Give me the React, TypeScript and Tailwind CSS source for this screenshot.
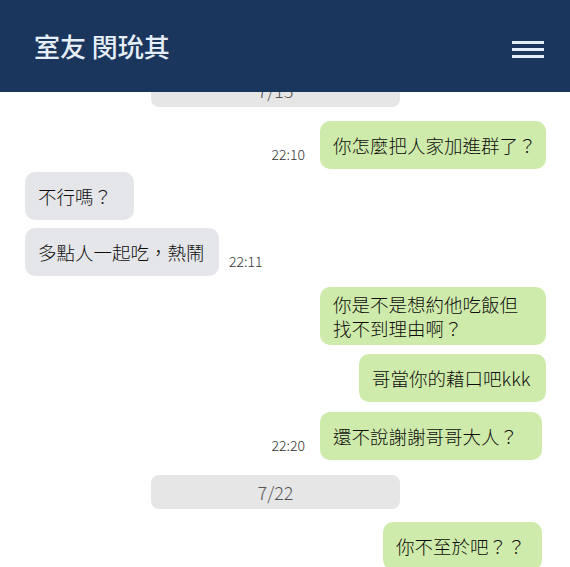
const font = { fontFamily: '"Noto Sans CJK TC", "Noto Sans", sans-serif' };

type Msg =
  | { kind: "date"; text: string; mt: string }
  | { kind: "me" | "them"; lines: string[]; time?: string; mt: string; w: string; py?: string; mr?: string };

const messages: Msg[] = [
  { kind: "date", text: "7/15", mt: "mt-0" },
  { kind: "me", lines: ["你怎麼把人家加進群了？"], time: "22:10", mt: "mt-[14px]", w: "w-[226px]" },
  { kind: "them", lines: ["不行嗎？"], mt: "mt-[3px]", w: "w-[109px]" },
  { kind: "them", lines: ["多點人一起吃，熱鬧"], time: "22:11", mt: "mt-[8px]", w: "w-[194px]" },
  { kind: "me", lines: ["你是不是想約他吃飯但", "找不到理由啊？"], mt: "mt-[11px]", w: "w-[226px]", py: "py-[5px]" },
  { kind: "me", lines: ["哥當你的藉口吧kkk"], mt: "mt-[9px]", w: "w-[187px]" },
  { kind: "me", lines: ["還不說謝謝哥哥大人？"], time: "22:20", mt: "mt-[10px]", w: "w-[222px]", mr: "mr-[4px]" },
  { kind: "date", text: "7/22", mt: "mt-[15px]" },
  { kind: "me", lines: ["你不至於吧？？"], mt: "mt-[13px]", w: "w-[159px]", mr: "mr-[4px]" },
];

function Time({ t }: { t: string }) {
  return <span className="mb-[6px] text-[14px] leading-[18px] font-light text-[#333]">{t}</span>;
}

export default function App() {
  return (
    <div className="relative h-[567px] w-[570px] overflow-hidden bg-white" style={font}>
      <header className="absolute inset-x-0 top-0 z-10 flex h-[92px] items-center justify-between bg-[#1b365d] pl-[34px] pr-[26px]">
        <h1 className="text-[26px] leading-none font-medium text-[#e6eef8]">室友 閔玧其</h1>
        <div className="flex w-[32px] flex-col gap-[4px] pt-[6px]">
          <span className="h-[3px] bg-[#e3edf8]" />
          <span className="h-[3px] bg-[#e3edf8]" />
          <span className="h-[3px] bg-[#e3edf8]" />
        </div>
      </header>

      <div className="flex flex-col pt-[73px] pl-[25px] pr-[24px]">
        {messages.map((m, i) => {
          if (m.kind === "date") {
            return (
              <div key={i} className={`flex justify-center ${m.mt}`}>
                <div className="mr-[20px] flex h-[34px] w-[249px] items-center justify-center rounded-[8px] bg-[#e6e6e6] text-[18px] font-light text-[#555]">
                  {m.text}
                </div>
              </div>
            );
          }
          const mine = m.kind === "me";
          return (
            <div
              key={i}
              className={`flex items-end ${mine ? "justify-end gap-[15px]" : "justify-start gap-[10px]"} ${m.mt}`}
            >
              {mine && m.time && <Time t={m.time} />}
              <div
                className={`shrink-0 rounded-[10px] pl-[13px] text-[18.5px] leading-[24px] font-light text-[#0d0d0d] ${
                  mine ? "bg-[#cfebab]" : "bg-[#e5e6ea]"
                } ${m.w} ${m.py ?? "py-[12px]"} ${m.mr ?? ""}`}
              >
                {m.lines.map((l, j) => (
                  <div key={j} className="whitespace-nowrap">
                    {l}
                  </div>
                ))}
              </div>
              {!mine && m.time && <Time t={m.time} />}
            </div>
          );
        })}
      </div>
    </div>
  );
}
